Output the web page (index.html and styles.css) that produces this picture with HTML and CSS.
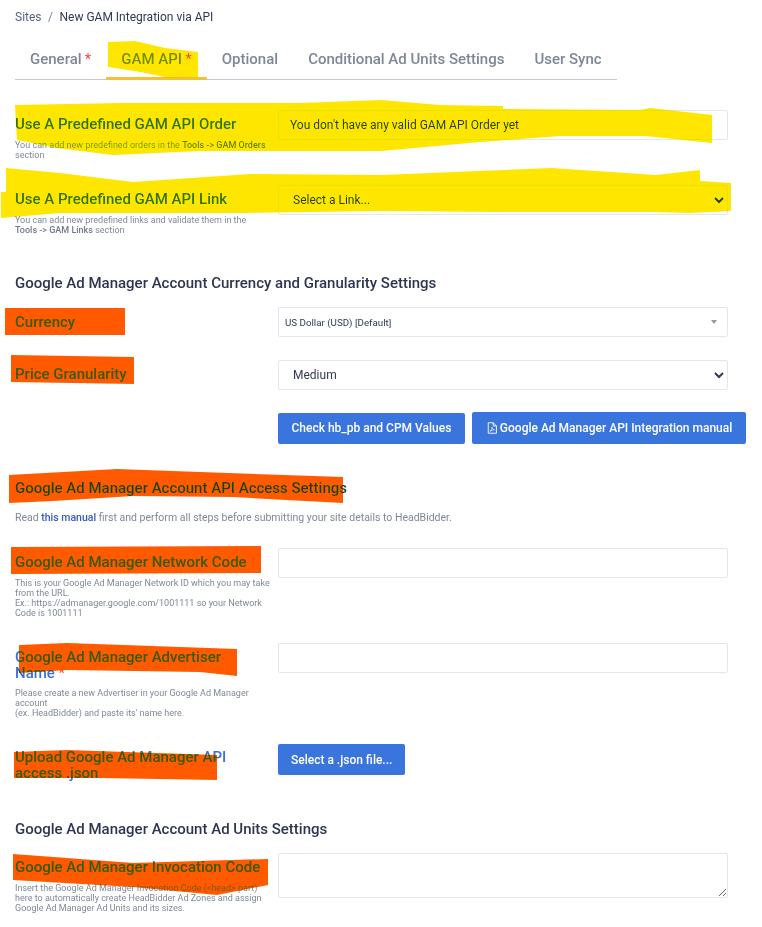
FILE: index.html
```html
<!DOCTYPE html>
<html lang="en">
<head>
<meta charset="utf-8">
<title>New GAM Integration via API</title>
<link rel="stylesheet" href="styles.css">
</head>
<body>
<main class="page">
  <nav class="crumbs"><a class="crumb-link">Sites</a><span class="crumb-sep">/</span><span>New GAM Integration via API</span></nav>
  <ul class="tabs">
    <li class="tab">General <i class="req">*</i></li>
    <li class="tab active">GAM API <i class="req">*</i></li>
    <li class="tab">Optional</li>
    <li class="tab">Conditional Ad Units Settings</li>
    <li class="tab">User Sync</li>
  </ul>

  <section class="row r1">
    <div><label class="lbl">Use A Predefined GAM API Order</label>
      <p class="help">You can add new predefined orders in the <b>Tools -&gt; GAM Orders</b> section</p></div>
    <input class="field order" value="You don't have any valid GAM API Order yet" readonly>
  </section>
  <section class="row r2">
    <div><label class="lbl">Use A Predefined GAM API Link</label>
      <p class="help">You can add new predefined links and validate them in the <b>Tools -&gt; GAM Links</b> section</p></div>
    <select class="field pick"><option>Select a Link...</option></select>
  </section>

  <h3 class="head h-cur">Google Ad Manager Account Currency and Granularity Settings</h3>
  <section class="row r3">
    <label class="lbl">Currency</label>
    <div class="field combo"><span>US Dollar (USD) [Default]</span><i class="tri"></i></div>
  </section>
  <section class="row r4">
    <label class="lbl">Price Granularity</label>
    <select class="field pick"><option>Medium</option></select>
  </section>
  <div class="btns">
    <button class="btn first">Check hb_pb and CPM Values</button>
    <button class="btn tall"><svg class="pdf" viewBox="0 0 12 14" aria-hidden="true"><path d="M1.5.7h6l3.8 3.8v8.8h-9.8zM7.500.7v3.800h3.800" fill="none" stroke="#fff" stroke-width="1.1"/><path d="M3.400 11.200c1.400-1 2.500-3 2.600-5.200.6 2 1.400 2.900 3 3.200-1.900 0-3.800.7-5.600 2z" fill="none" stroke="#fff" stroke-width=".8"/></svg>Google Ad Manager API Integration manual</button>
  </div>

  <h3 class="head h-api">Google Ad Manager Account API Access Settings</h3>
  <p class="note">Read <a class="inline">this manual</a> first and perform all steps before submitting your site details to HeadBidder.</p>
  <section class="row r5">
    <div><label class="lbl">Google Ad Manager Network Code <i class="req">*</i></label>
      <p class="help">This is your Google Ad Manager Network ID which you may take from the URL.<br>Ex.: https://admanager.google.com/1001111 so your Network Code is 1001111</p></div>
    <input class="field">
  </section>
  <section class="row r6">
    <div><label class="lbl">Google Ad Manager Advertiser Name <i class="req">*</i></label>
      <p class="help">Please create a new Advertiser in your Google Ad Manager account<br>(ex. HeadBidder) and paste its' name here.</p></div>
    <input class="field">
  </section>
  <section class="row r7">
    <label class="lbl">Upload Google Ad Manager API access .json <i class="req">*</i></label>
    <div><button class="btn json">Select a .json file...</button></div>
  </section>

  <h3 class="head h-units">Google Ad Manager Account Ad Units Settings</h3>
  <section class="row r8">
    <div><label class="lbl">Google Ad Manager Invocation Code</label>
      <p class="help">Insert the Google Ad Manager Invocation Code (&lt;head&gt; part) here to automatically create HeadBidder Ad Zones and assign Google Ad Manager Ad Units and its sizes.</p></div>
    <textarea class="field area"></textarea>
  </section>

  <svg class="marks" viewBox="0 0 762 927" aria-hidden="true">
    <path class="yellow" d="M108 42 135 41 165 48 198 52 198 77 170 78 135 71 108 67Z"/>
    <path class="yellow" d="M15 105 120 103 300 103 381 100 440 105 503 106 503 109 640 110 650 108 712 115 712 143 645 136 560 136 480 142 381 151 200 151 113 155 57 148 17 140Z"/>
    <path class="yellow" d="M6 168 60 173 133 182 250 174 381 175 551 168 656 175 700 170 700 181 731 183 731 211 690 213 650 212 501 212 381 211 240 213 60 213 1 218 1 192 6 192Z"/>
    <path class="orange" d="M5 308H125V335H5Z"/>
    <path class="orange" d="M11 355 134 357V384L11 382Z"/>
    <path class="orange" d="M9 475 117 469 200 472 343 477V503L233 497 133 496 53 501 9 503Z"/>
    <path class="orange" d="M11 547 261 546V573L11 574Z"/>
    <path class="orange" d="M19 645 67 643 237 649V676L200 672 67 670 19 673Z"/>
    <path class="orange" d="M14 752 67 750 217 755V780L100 778H14Z"/>
    <path class="orange" d="M13 854 67 858 133 863 268 859V885L217 895 133 887 13 880Z"/>
  </svg>
</main>
</body>
</html>
```
FILE: styles.css
```css
* { box-sizing: border-box; }
html, body { margin: 0; background: #fff; }
body { font-family: Roboto, "Liberation Sans", sans-serif; color: #2c3650; }
.page { position: relative; width: 762px; height: 927px; overflow: hidden; padding: 10px 0 0 15px; }
.crumbs { display: flex; font-size: 12px; line-height: 14px; color: #2f3a52; }
.crumb-link { color: #55657f; }
.crumb-sep { margin: 0 6.5px; color: #7a8699; }
.tabs { display: flex; list-style: none; width: 602px; height: 40px; margin: 16px 0 0; padding: 0; border-bottom: 1px solid #c2c8d0; }
.tab { height: 40px; padding: 0 15px; font-size: 15px; font-weight: 500; line-height: 38px; color: #7d8797; white-space: nowrap; }
.tab.active { border-bottom: 3px solid #f0c23b; }
.tab .req { margin-left: -0.5px; }
.req { font-style: normal; color: #ef4a4a; font-weight: 400; }
.row { display: grid; grid-template-columns: 263px 450px; align-items: start; }
.lbl { display: block; padding-top: 7px; font-size: 15px; font-weight: 500; line-height: 15.5px; color: #3a6fdc; width: 248px; }
.help { margin: 7.5px 0 0; width: 256px; font-size: 9px; line-height: 10px; color: #7f8898; }
.help b { font-weight: 500; color: #6f7888; white-space: nowrap; }
.field { display: block; width: 450px; height: 30px; margin: 0; background: #fff; border: 1px solid #e2e6ee; border-radius: 2px; color: #2f3a52; font: 12px Roboto, "Liberation Sans", sans-serif; outline: 0; }
.order { padding: 0 11px; }
.pick { padding: 0 10px; }
.combo { display: flex; align-items: center; justify-content: space-between; padding: 0 10px 0 6px; font-size: 9.75px; }
.tri { width: 0; height: 0; border: 3px solid transparent; border-top: 4px solid #999; border-bottom: 0; }
.area { height: 45px; padding: 4px 10px; }
.r1 { margin-top: 30px; }
.r2 { margin-top: 25px; }
.head { margin: 0; font-size: 15px; font-weight: 500; line-height: 18px; color: #2c3650; }
.h-cur { margin-top: 39px; }
.r3 { margin-top: 15px; }
.r4 { margin-top: 23px; }
.r3 .lbl { padding-top: 8px; }
.btns { display: flex; gap: 7px; margin: 22px 0 0 263px; align-items: center; white-space: nowrap; }
.btn { height: 31px; padding: 0 14px; border: 0; border-radius: 2px; background: #3a75dd; color: #fff; font: 500 12px Roboto, "Liberation Sans", sans-serif; white-space: nowrap; }
.first { padding: 0 13.5px; }
.tall { height: 32px; padding: 0 14px 0 15px; }
.json { padding: 0 13px; }
.pdf { width: 10px; height: 12px; margin-right: 3px; vertical-align: -2px; }
.h-api { margin-top: 35px; }
.note { margin: 14px 0 0; font-size: 10.5px; line-height: 14px; color: #7f8898; }
.inline { color: #3a5bb8; font-weight: 500; }
.r5 { margin-top: 23px; }
.r6 { margin-top: 25px; }
.r6 .help { margin-top: 7px; }
.r7 { margin-top: 26px; }
.r7 .lbl { padding-top: 6px; }
.h-units { margin-top: 39px; }
.r8 { margin-top: 15px; }
.marks { position: absolute; left: 0; top: 0; width: 762px; height: 927px; mix-blend-mode: darken; pointer-events: none; }
.yellow { fill: #ffe600; }
.orange { fill: #ff5a00; }
```
